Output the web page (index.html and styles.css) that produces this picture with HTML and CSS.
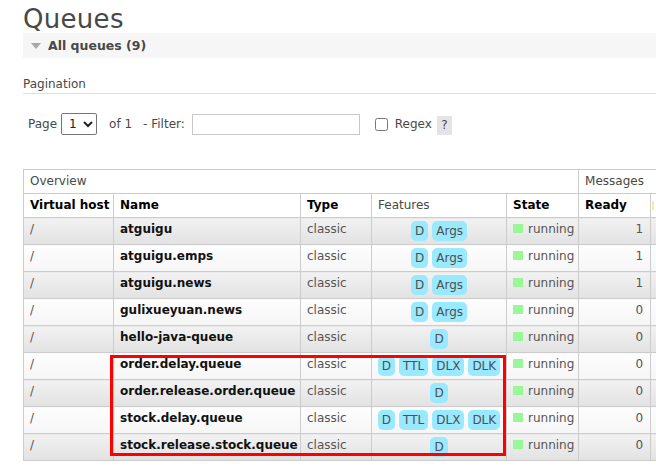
FILE: index.html
```html
<!DOCTYPE html>
<html>
<head>
<meta charset="utf-8">
<link rel="stylesheet" href="styles.css">
</head>
<body>
<div class="page">
  <h1 class="title">Queues</h1>
  <div class="section-head">
    <span class="tri"></span>
    <span class="section-title">All queues (9)</span>
  </div>
  <div class="pag-label">Pagination</div>
  <div class="pag-row">
    <span class="lbl-page">Page</span>
    <select class="sel"><option>1</option></select>
    <span class="lbl-of">of 1</span>
    <span class="lbl-filter">- Filter:</span>
    <input class="filter" type="text">
    <input class="chk" type="checkbox">
    <span class="lbl-regex">Regex</span>
    <span class="help">?</span>
  </div>

  <div class="table-wrap">
    <table class="list">
      <colgroup>
        <col class="c-vh"><col class="c-name"><col class="c-type"><col class="c-feat"><col class="c-state"><col class="c-ready"><col class="c-more">
      </colgroup>
      <thead>
        <tr class="group">
          <th colspan="5">Overview</th>
          <th colspan="2">Messages</th>
        </tr>
        <tr class="cols">
          <th>Virtual host</th>
          <th>Name</th>
          <th>Type</th>
          <th class="plain">Features</th>
          <th>State</th>
          <th>Ready</th>
          <th class="unacked"><span class="mark"></span></th>
        </tr>
      </thead>
      <tbody>
        <tr class="alt1"><td>/</td><td class="name">atguigu</td><td>classic</td><td class="feat"><span class="b">D</span><span class="b">Args</span></td><td><span class="dot"></span>running</td><td class="num">1</td><td></td></tr>
        <tr class="alt2"><td>/</td><td class="name">atguigu.emps</td><td>classic</td><td class="feat"><span class="b">D</span><span class="b">Args</span></td><td><span class="dot"></span>running</td><td class="num">1</td><td></td></tr>
        <tr class="alt1"><td>/</td><td class="name">atguigu.news</td><td>classic</td><td class="feat"><span class="b">D</span><span class="b">Args</span></td><td><span class="dot"></span>running</td><td class="num">1</td><td></td></tr>
        <tr class="alt2"><td>/</td><td class="name">gulixueyuan.news</td><td>classic</td><td class="feat"><span class="b">D</span><span class="b">Args</span></td><td><span class="dot"></span>running</td><td class="num">0</td><td></td></tr>
        <tr class="alt1"><td>/</td><td class="name">hello-java-queue</td><td>classic</td><td class="feat"><span class="b">D</span></td><td><span class="dot"></span>running</td><td class="num">0</td><td></td></tr>
        <tr class="alt2"><td>/</td><td class="name">order.delay.queue</td><td>classic</td><td class="feat"><span class="b">D</span><span class="b">TTL</span><span class="b">DLX</span><span class="b">DLK</span></td><td><span class="dot"></span>running</td><td class="num">0</td><td></td></tr>
        <tr class="alt1"><td>/</td><td class="name">order.release.order.queue</td><td>classic</td><td class="feat"><span class="b">D</span></td><td><span class="dot"></span>running</td><td class="num">0</td><td></td></tr>
        <tr class="alt2"><td>/</td><td class="name">stock.delay.queue</td><td>classic</td><td class="feat"><span class="b">D</span><span class="b">TTL</span><span class="b">DLX</span><span class="b">DLK</span></td><td><span class="dot"></span>running</td><td class="num">0</td><td></td></tr>
        <tr class="alt1"><td>/</td><td class="name">stock.release.stock.queue</td><td>classic</td><td class="feat"><span class="b">D</span></td><td><span class="dot"></span>running</td><td class="num">0</td><td></td></tr>
      </tbody>
    </table>
    <div class="highlight"></div>
  </div>
</div>
</body>
</html>
```
FILE: styles.css
```css
html, body {
  margin: 0;
  padding: 0;
  background: #fff;
  overflow: hidden;
}
body {
  font-family: "DejaVu Sans", Verdana, sans-serif;
  font-size: 12px;
  color: #484848;
}
.page {
  padding-left: 23px;
  width: 900px;
}
.title {
  font-size: 26px;
  font-weight: normal;
  color: #484848;
  margin: 0;
  height: 33px;
  line-height: 38px;
  letter-spacing: 0.3px;
}
.section-head {
  background: #f6f6f6;
  height: 25px;
  display: flex;
  align-items: center;
}
.tri {
  width: 0;
  height: 0;
  border-left: 5px solid transparent;
  border-right: 5px solid transparent;
  border-top: 6px solid #a8a8a8;
  margin-left: 8px;
  margin-right: 7px;
  margin-top: 1px;
}
.section-title {
  font-weight: bold;
  font-size: 12.5px;
  color: #484848;
}
.pag-label {
  margin-top: 18px;
  height: 16px;
  line-height: 16px;
  padding-bottom: 1px;
  border-bottom: 1px solid #e0e0e0;
  font-size: 12px;
}
.pag-row {
  display: flex;
  align-items: center;
  height: 24px;
  margin-top: 18px;
}
.lbl-page { margin-left: 5px; margin-right: 4px; }
.sel {
  width: 36px;
  height: 22px;
  font-family: inherit;
  font-size: 12px;
  color: #222;
  border: 1px solid #767676;
  border-radius: 2px;
  background: #fff;
  padding: 0 0 0 3px;
}
.lbl-of { margin-left: 12px; }
.lbl-filter { margin-left: 11px; margin-right: 7px; }
.filter {
  width: 164px;
  height: 17px;
  border: 1px solid #c8c8c8;
  padding: 1px;
  margin: 0;
}
.chk {
  width: 13px;
  height: 13px;
  margin: 0 0 0 15px;
}
.lbl-regex { margin-left: 7px; }
.help {
  margin-left: 5px;
  background: #e4e4e4;
  width: 15px;
  height: 19px;
  line-height: 19px;
  text-align: center;
  margin-top: 2px;
}
.table-wrap {
  position: relative;
  margin-top: 33px;
}
table.list {
  border-collapse: collapse;
  table-layout: fixed;
  width: 667px;
}
.c-vh { width: 90px; }
.c-name { width: 187px; }
.c-type { width: 71px; }
.c-feat { width: 135px; }
.c-state { width: 72px; }
.c-ready { width: 72px; }
.c-more { width: 40px; }
table.list th, table.list td {
  border: 1px solid #cccccc;
  padding: 0 6px;
  text-align: left;
  white-space: nowrap;
  overflow: hidden;
}
tr.group th {
  font-weight: normal;
  height: 23px;
  line-height: 23px;
  color: #484848;
  background: #fff;
}
tr.cols th {
  font-weight: bold;
  color: #000;
  height: 23px;
  line-height: 23px;
  background: #fff;
}
tr.cols th.plain {
  font-weight: normal;
  color: #484848;
}
th.unacked { padding-left: 1px !important; }
.mark {
  display: inline-block;
  width: 2px;
  height: 9px;
  background: #f6e8a6;
  vertical-align: middle;
}
table.list td {
  height: 27px;
  vertical-align: top;
  line-height: 14px;
  padding-top: 4px;
  padding-bottom: 0;
  box-sizing: border-box;
  color: #555;
}
tr.alt1 td {
  background: linear-gradient(to bottom, #f2f2f2 0%, #e2e2e2 100%);
}
tr.alt2 td {
  background: linear-gradient(to bottom, #fdfdfd 0%, #f6f6f6 100%);
}
td.name {
  font-weight: bold;
  color: #111 !important;
}
td.feat {
  text-align: center !important;
  padding-top: 3px !important;
  padding-left: 2px !important;
  padding-right: 2px !important;
}
.b {
  display: inline-block;
  background: #99e9ff;
  border-radius: 5px;
  height: 20px;
  line-height: 21px;
  padding: 0 4px;
  margin: 0 2px;
  color: #505050;
  vertical-align: top;
}
.dot {
  display: inline-block;
  width: 10px;
  height: 9px;
  background: #99f797;
  margin-right: 5px;
  vertical-align: top;
  margin-top: 2px;
}
td.num { text-align: right !important; padding-right: 7px !important; }
.highlight {
  position: absolute;
  left: 87px;
  top: 186px;
  width: 390px;
  height: 95px;
  border: 3px solid #ff0000;
  pointer-events: none;
}
```
